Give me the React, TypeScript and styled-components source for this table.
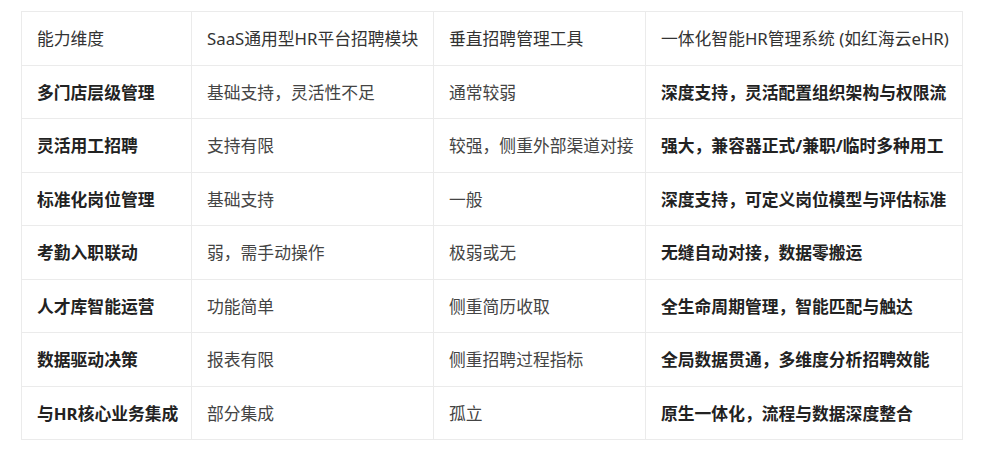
import React from 'react';
import styled, { createGlobalStyle } from 'styled-components';

const GlobalStyle = createGlobalStyle`
  body {
    margin: 0;
    background: #ffffff;
    font-family: "Noto Sans", "Noto Sans CJK SC", sans-serif;
  }
`;

const Page = styled.div`
  padding: 11px 25px 0 21px;
`;

const Table = styled.table`
  width: 941px;
  border-collapse: collapse;
  table-layout: fixed;
  font-size: 16.8px;
  color: #333;
`;

const Row = styled.tr`
  height: 53.5px;
`;

const Cell = styled.td<{ strong?: boolean; head?: boolean }>`
  border: 1px solid #ebebeb;
  padding: 0 15px;
  white-space: nowrap;
  vertical-align: middle;
  font-weight: ${(p) => (p.strong ? 700 : 400)};
  color: ${(p) => (p.strong ? '#222' : p.head ? '#333' : '#444')};
`;

const columns = [170, 242, 212, 317];

const header = ['能力维度', 'SaaS通用型HR平台招聘模块', '垂直招聘管理工具', '一体化智能HR管理系统 (如红海云eHR)'];

const rows = [
  ['多门店层级管理', '基础支持，灵活性不足', '通常较弱', '深度支持，灵活配置组织架构与权限流'],
  ['灵活用工招聘', '支持有限', '较强，侧重外部渠道对接', '强大，兼容器正式/兼职/临时多种用工'],
  ['标准化岗位管理', '基础支持', '一般', '深度支持，可定义岗位模型与评估标准'],
  ['考勤入职联动', '弱，需手动操作', '极弱或无', '无缝自动对接，数据零搬运'],
  ['人才库智能运营', '功能简单', '侧重简历收取', '全生命周期管理，智能匹配与触达'],
  ['数据驱动决策', '报表有限', '侧重招聘过程指标', '全局数据贯通，多维度分析招聘效能'],
  ['与HR核心业务集成', '部分集成', '孤立', '原生一体化，流程与数据深度整合'],
];

const App = () => {
  return (
    <Page>
      <GlobalStyle />
      <Table>
        <colgroup>
          {columns.map((w, i) => (
            <col key={i} style={{ width: w }} />
          ))}
        </colgroup>
        <tbody>
          <Row>
            {header.map((h) => (
              <Cell key={h} head>
                {h}
              </Cell>
            ))}
          </Row>
          {rows.map((r) => (
            <Row key={r[0]}>
              {r.map((c, i) => (
                <Cell key={i} strong={i === 0 || i === 3}>
                  {c}
                </Cell>
              ))}
            </Row>
          ))}
        </tbody>
      </Table>
    </Page>
  );
};

export default App;
